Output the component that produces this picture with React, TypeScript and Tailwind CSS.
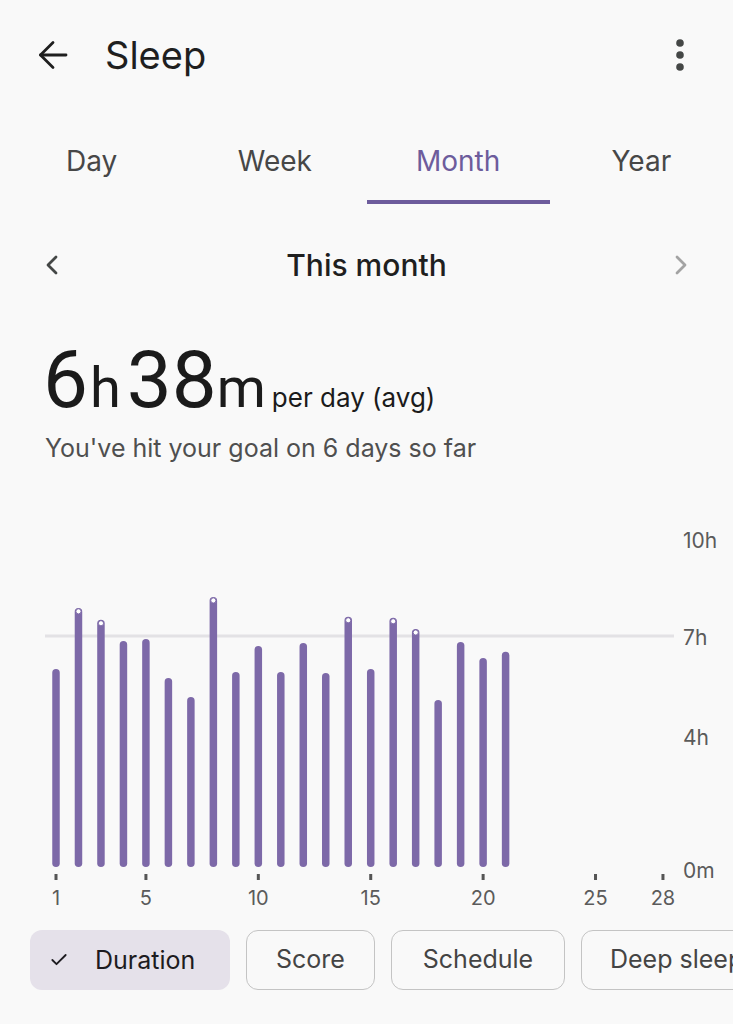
import React from 'react';
import { Check } from 'lucide-react';

// hours slept per day this month
const days = [
  6.03, 7.88, 7.52, 6.88, 6.94, 5.76, 5.18, 8.21, 5.94, 6.73, 5.94,
  6.82, 5.91, 7.61, 6.03, 7.58, 7.24, 5.09, 6.85, 6.36, 6.55,
];

const GOAL = 7;
const OFFSET = 515; // page y where the chart svg starts
const BASE = 868; // page y of 0m
const PER_HOUR = 33;
const dayX = (d: number) => 56 + (d - 1) * 22.48;

const tabs = ['Day', 'Week', 'Month', 'Year'];
const yLabels = [
  { label: '10h', y: 540 },
  { label: '7h', y: 637 },
  { label: '4h', y: 737 },
  { label: '0m', y: 870 },
];
const xTicks = [1, 5, 10, 15, 20, 25, 28];

const SleepChart = () => (
  <svg width="733" height="400" viewBox="0 0 733 400" className="block">
    {/* goal line */}
    <line x1="45" x2="674" y1={636 - OFFSET} y2={636 - OFFSET} stroke="#e3e2e5" strokeWidth="3" />

    {days.map((h, i) => {
      const cx = dayX(i + 1);
      const top = BASE - h * PER_HOUR - OFFSET;
      const bottom = 867 - OFFSET;
      return (
        <g key={i}>
          <rect x={cx - 3.75} y={top} width="7.5" height={bottom - top} rx="3.75" fill="#7d69a8" />
          {h >= GOAL && <circle cx={cx} cy={top + 3.4} r="2.6" fill="#ffffff" stroke="#7d69a8" strokeWidth="1" />}
        </g>
      );
    })}

    {xTicks.map((d) => (
      <g key={d}>
        <rect x={dayX(d) - 1.5} y={874 - OFFSET} width="3" height="6" fill="#555555" />
        <text
          x={dayX(d)}
          y={898 - OFFSET}
          textAnchor="middle"
          dominantBaseline="central"
          fontFamily="Inter, sans-serif"
          fontSize="20"
          fill="#5b5b5b"
        >
          {d}
        </text>
      </g>
    ))}

    {yLabels.map((l) => (
      <text
        key={l.label}
        x="683"
        y={l.y - OFFSET}
        dominantBaseline="central"
        fontFamily="Inter, sans-serif"
        fontSize="21"
        fill="#5b5b5b"
      >
        {l.label}
      </text>
    ))}
  </svg>
);

const App = () => {
  return (
    <div className="w-[733px] h-[1024px] overflow-hidden bg-[#f9f9f9] font-['Inter',sans-serif] text-[#1f1f1f]">
      {/* Header */}
      <div className="flex items-center h-[110px] pl-[38px] pr-[49px]">
        <svg width="30" height="30" viewBox="0 0 30 30" fill="none" stroke="#1f1f1f" strokeWidth="2.8" strokeLinecap="round" strokeLinejoin="round">
          <path d="M28 15H2.5" />
          <path d="M15 2.5L2.5 15L15 27.5" />
        </svg>
        <h1 className="ml-[37px] text-[38px] leading-none">Sleep</h1>
        <svg width="8" height="32" viewBox="0 0 8 32" className="ml-auto" fill="#444746">
          <circle cx="4" cy="4" r="3.8" />
          <circle cx="4" cy="16" r="3.8" />
          <circle cx="4" cy="28" r="3.8" />
        </svg>
      </div>

      {/* Tabs */}
      <div className="grid grid-cols-4 h-[86px] mt-[8px]">
        {tabs.map((t) => (
          <div key={t} className="relative flex items-center justify-center">
            <span className={`text-[28px] leading-none ${t === 'Month' ? 'text-[#6d5c9c]' : 'text-[#474747]'}`}>{t}</span>
            {t === 'Month' && <div className="absolute bottom-0 left-0 right-0 h-[4px] bg-[#6d5c9c]" />}
          </div>
        ))}
      </div>

      {/* Period switcher */}
      <div className="grid grid-cols-[auto_1fr_auto] items-center h-[60px] mt-[31px] px-[45px]">
        <svg width="14" height="22" viewBox="0 0 14 22" fill="none" stroke="#444746" strokeWidth="2.8" strokeLinecap="round" strokeLinejoin="round">
          <path d="M11 3L3 11L11 19" />
        </svg>
        <div className="text-center text-[30px] font-medium leading-none">This month</div>
        <svg width="14" height="22" viewBox="0 0 14 22" fill="none" stroke="#a3a3a3" strokeWidth="2.8" strokeLinecap="round" strokeLinejoin="round">
          <path d="M3 3L11 11L3 19" />
        </svg>
      </div>

      {/* Average */}
      <div className="flex items-baseline h-[80px] mt-[45px] pl-[43px] font-['Roboto',sans-serif] text-[#1b1b1b]">
        <span className="text-[80px] leading-none">6</span>
        <span className="text-[56px] leading-none ml-[2px]">h</span>
        <span className="text-[80px] leading-none ml-[6px]">38</span>
        <span className="text-[56px] leading-none">m</span>
        <span className="text-[26px] leading-none ml-[6px] font-['Inter',sans-serif]">per day (avg)</span>
      </div>
      <p className="mt-[14px] pl-[45px] text-[25px] leading-[28px] text-[#4f4f4f]">You've hit your goal on 6 days so far</p>

      {/* Chart */}
      <div className="mt-[53px]">
        <SleepChart />
      </div>

      {/* Metric chips */}
      <div className="flex gap-[16px] mt-[15px] pl-[30px] whitespace-nowrap">
        <div className="flex items-center h-[60px] w-[200px] shrink-0 rounded-[12px] bg-[#e5e1ea] pl-[19px]">
          <Check size={20} strokeWidth={2.2} className="text-[#1d1b20]" />
          <span className="ml-[26px] text-[25px] leading-none text-[#1d1b20]">Duration</span>
        </div>
        <div className="flex items-center justify-center h-[60px] w-[129px] shrink-0 rounded-[12px] border-[1.5px] border-[#c4c4c4] text-[25px] text-[#444444]">
          Score
        </div>
        <div className="flex items-center justify-center h-[60px] w-[174px] shrink-0 rounded-[12px] border-[1.5px] border-[#c4c4c4] text-[25px] text-[#444444]">
          Schedule
        </div>
        <div className="flex items-center h-[60px] w-[190px] shrink-0 rounded-[12px] border-[1.5px] border-[#c4c4c4] pl-[28px] text-[25px] text-[#444444]">
          Deep sleep
        </div>
      </div>
    </div>
  );
};

export default App;
